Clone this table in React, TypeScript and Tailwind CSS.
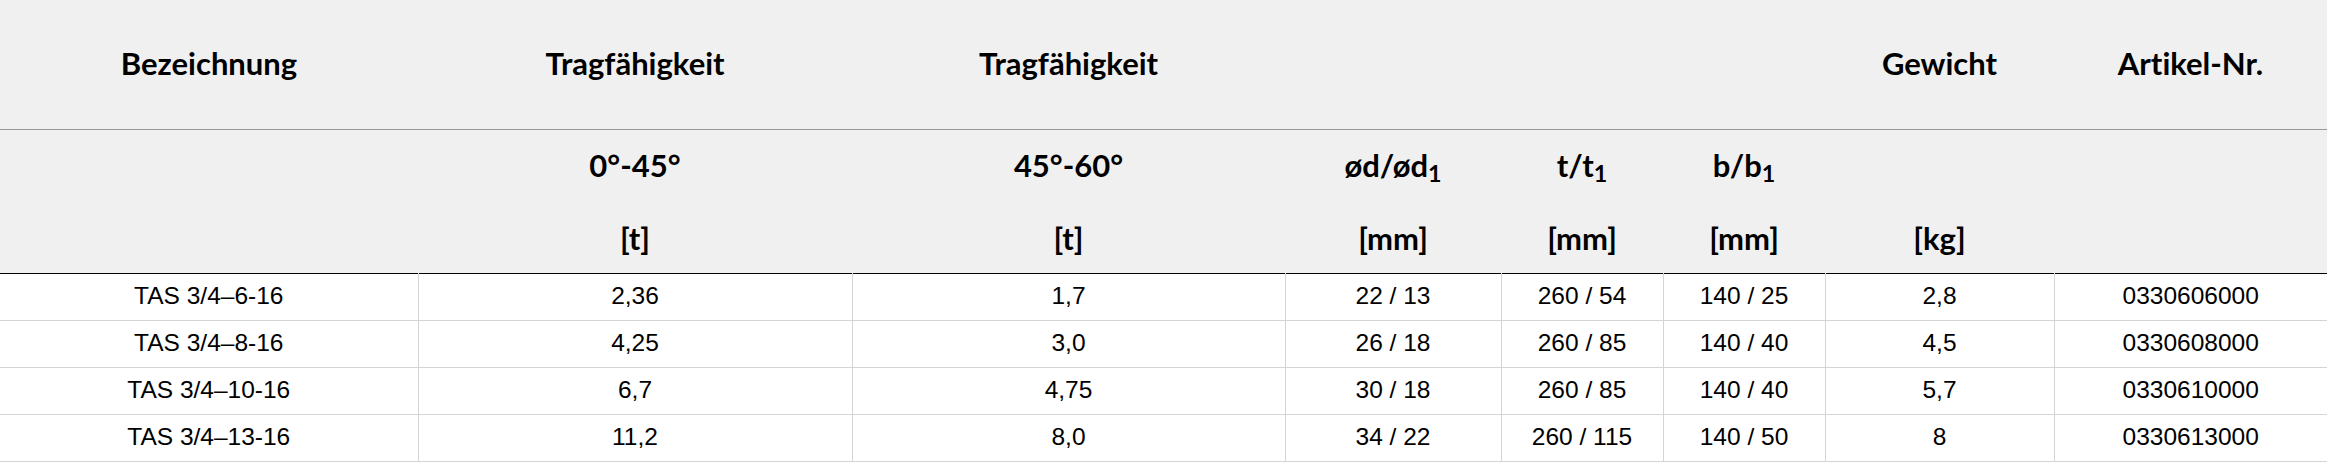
import React from "react";

type Row = {
  name: string;
  wll45: string;
  wll60: string;
  d: string;
  t: string;
  b: string;
  weight: string;
  article: string;
};

const rows: Row[] = [
  { name: "TAS 3/4–6-16", wll45: "2,36", wll60: "1,7", d: "22 / 13", t: "260 / 54", b: "140 / 25", weight: "2,8", article: "0330606000" },
  { name: "TAS 3/4–8-16", wll45: "4,25", wll60: "3,0", d: "26 / 18", t: "260 / 85", b: "140 / 40", weight: "4,5", article: "0330608000" },
  { name: "TAS 3/4–10-16", wll45: "6,7", wll60: "4,75", d: "30 / 18", t: "260 / 85", b: "140 / 40", weight: "5,7", article: "0330610000" },
  { name: "TAS 3/4–13-16", wll45: "11,2", wll60: "8,0", d: "34 / 22", t: "260 / 115", b: "140 / 50", weight: "8", article: "0330613000" },
];

const head =
  "font-['Lato','Noto_Sans',sans-serif] font-bold text-[31px] text-black [font-variant-ligatures:none]";

function SubHead({ top, unit }: { top?: React.ReactNode; unit?: string }) {
  return (
    <div className="flex h-[143px] flex-col items-center pt-[15px] leading-[40px]">
      <div className="h-[40px]">{top}</div>
      <div className="mt-[33px] h-[40px]">{unit}</div>
    </div>
  );
}

export default function App() {
  const cell = "border-r border-b border-[#d4d4d4] text-center h-[47px] p-0";
  return (
    <div className="w-[2327px] overflow-hidden bg-white">
      <table className="w-[2327px] table-fixed border-collapse">
        <colgroup>
          <col className="w-[418px]" />
          <col className="w-[434px]" />
          <col className="w-[433px]" />
          <col className="w-[216px]" />
          <col className="w-[162px]" />
          <col className="w-[162px]" />
          <col className="w-[229px]" />
          <col className="w-[273px]" />
        </colgroup>
        <thead className={`bg-[#f0f0f0] ${head}`}>
          <tr className="h-[129px] border-b border-[#9a9a9a]">
            <th className="p-0 pb-[2px]">Bezeichnung</th>
            <th className="p-0 pb-[2px]">Tragfähigkeit</th>
            <th className="p-0 pb-[2px]">Tragfähigkeit</th>
            <th colSpan={3} className="p-0"></th>
            <th className="p-0 pb-[2px]">Gewicht</th>
            <th className="p-0 pb-[2px]">Artikel-Nr.</th>
          </tr>
          <tr className="border-b-[1.5px] border-black">
            <th className="p-0"><SubHead /></th>
            <th className="p-0"><SubHead top="0°-45°" unit="[t]" /></th>
            <th className="p-0"><SubHead top="45°-60°" unit="[t]" /></th>
            <th className="p-0"><SubHead top={<>ød/ød<sub>1</sub></>} unit="[mm]" /></th>
            <th className="p-0"><SubHead top={<>t/t<sub>1</sub></>} unit="[mm]" /></th>
            <th className="p-0"><SubHead top={<>b/b<sub>1</sub></>} unit="[mm]" /></th>
            <th className="p-0"><SubHead unit="[kg]" /></th>
            <th className="p-0"><SubHead /></th>
          </tr>
        </thead>
        <tbody className="font-['Liberation_Sans','Arial',sans-serif] text-[24.5px] text-black">
          {rows.map((r) => (
            <tr key={r.article}>
              <td className={cell}>{r.name}</td>
              <td className={cell}>{r.wll45}</td>
              <td className={cell}>{r.wll60}</td>
              <td className={cell}>{r.d}</td>
              <td className={cell}>{r.t}</td>
              <td className={cell}>{r.b}</td>
              <td className={cell}>{r.weight}</td>
              <td className={`${cell} border-r-0`}>{r.article}</td>
            </tr>
          ))}
        </tbody>
      </table>
    </div>
  );
}
